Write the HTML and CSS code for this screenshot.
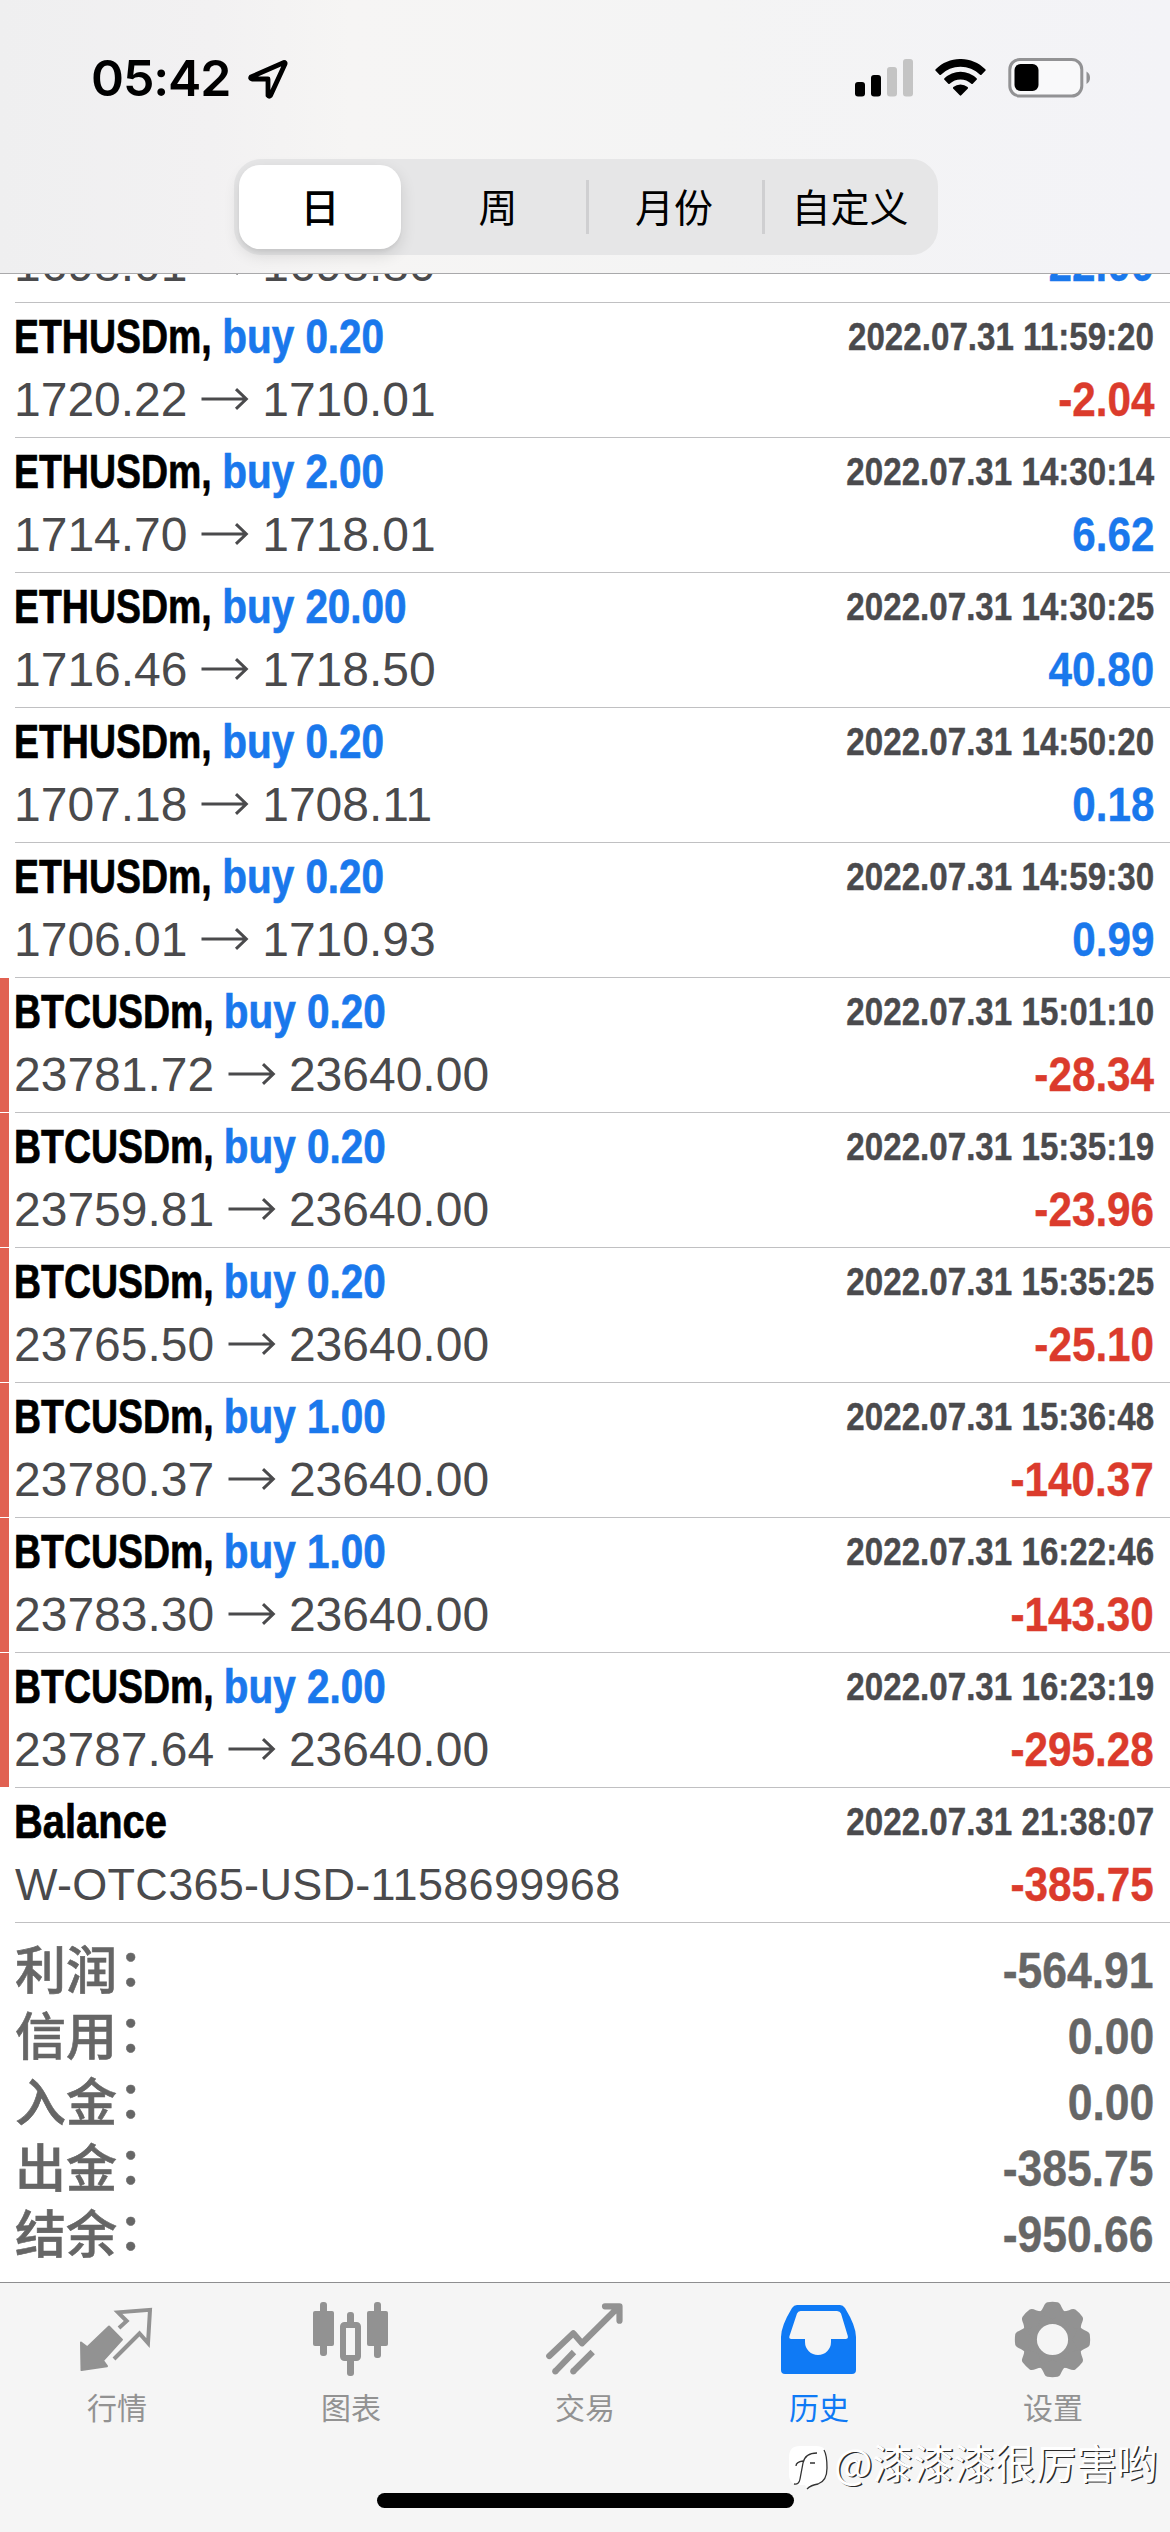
FILE: index.html
```
<!DOCTYPE html>
<html lang="zh-CN">
<head>
<meta charset="utf-8">
<title>历史</title>
<link rel="stylesheet" href="styles.css">
</head>
<body>
<svg class="defs" width="0" height="0" aria-hidden="true">
  <symbol id="arrow" viewBox="0 0 48 24"><path d="M0.5 12H45M35 2.2L45.3 12L35 21.8" fill="none" stroke="currentColor" stroke-width="3"/></symbol>
</svg>
<header class="header">
  <div class="status">
    <div class="clock">
      <span class="time">05:42</span>
      <svg class="location" viewBox="0 0 42 42"><path d="M37 4.500L4 19Q3 20.500 5 21H21V37.500Q22 39 23.500 37.500L38 6Q38.500 4.500 37 4.500Z" fill="none" stroke="#000" stroke-width="4.800" stroke-linejoin="round"/></svg>
    </div>
    <div class="indicators">
      <svg class="signal" viewBox="0 0 58 38">
        <rect x="0" y="23" width="10" height="14.5" rx="3"/><rect x="16" y="16" width="10" height="21.5" rx="3"/>
        <rect x="32" y="8" width="10" height="29.5" rx="3" fill="#c4c4c4"/><rect x="48" y="0" width="10" height="37.5" rx="3" fill="#c4c4c4"/>
      </svg>
      <svg class="wifi" viewBox="0.2 0 16.6 11.8" preserveAspectRatio="none"><path d="M8.5 2.46c2.37 0 4.65.91 6.37 2.54.13.13.34.12.47 0l1.24-1.25a.34.34 0 000-.49C12.06-1.09 4.94-1.09.42 3.26a.34.34 0 000 .49l1.24 1.25c.13.12.34.12.47 0A9.25 9.25 0 018.5 2.46zM8.5 6.54c1.3 0 2.56.48 3.52 1.36.13.12.34.12.47-.01l1.24-1.26a.35.35 0 000-.5 7.6 7.6 0 00-10.45 0 .35.35 0 000 .5l1.24 1.26c.13.13.34.13.47.01A5.2 5.2 0 018.5 6.54zM10.93 9.21c0 .1-.03.19-.1.25L8.74 11.58a.34.34 0 01-.48 0L6.17 9.46a.35.35 0 010-.5 3.6 3.6 0 014.65 0c.07.07.11.16.11.25z"/></svg>
      <svg class="battery" viewBox="0 0 83 40">
        <rect x="1.8" y="1.5" width="72" height="36.5" rx="10" fill="#f9f9fa" stroke="#929294" stroke-width="3"/>
        <rect x="6.5" y="6" width="24" height="27" rx="6"/>
        <path d="M78.5 13.5Q82 15.500 82 19.700T78.500 26Z" fill="#929294"/>
      </svg>
    </div>
  </div>
  <nav class="segments">
    <span class="segment selected">日</span><span class="segment">周</span><span class="segment divided">月份</span><span class="segment divided">自定义</span>
  </nav>
</header>

<main class="history">
  <article class="deal">
    <div class="line"><span class="title">ETHUSDm, <span class="side">buy 2.00</span></span><time class="date">2022.07.31 11:58:02</time></div>
    <div class="line"><span class="price">1698.01 <svg class="arrow"><use href="#arrow"/></svg> 1698.80</span><span class="amount gain">22.00</span></div>
  </article>
  <article class="deal">
    <div class="line"><span class="title">ETHUSDm, <span class="side">buy 0.20</span></span><time class="date">2022.07.31 11:59:20</time></div>
    <div class="line"><span class="price">1720.22 <svg class="arrow"><use href="#arrow"/></svg> 1710.01</span><span class="amount loss">-2.04</span></div>
  </article>
  <article class="deal">
    <div class="line"><span class="title">ETHUSDm, <span class="side">buy 2.00</span></span><time class="date">2022.07.31 14:30:14</time></div>
    <div class="line"><span class="price">1714.70 <svg class="arrow"><use href="#arrow"/></svg> 1718.01</span><span class="amount gain">6.62</span></div>
  </article>
  <article class="deal">
    <div class="line"><span class="title">ETHUSDm, <span class="side">buy 20.00</span></span><time class="date">2022.07.31 14:30:25</time></div>
    <div class="line"><span class="price">1716.46 <svg class="arrow"><use href="#arrow"/></svg> 1718.50</span><span class="amount gain">40.80</span></div>
  </article>
  <article class="deal">
    <div class="line"><span class="title">ETHUSDm, <span class="side">buy 0.20</span></span><time class="date">2022.07.31 14:50:20</time></div>
    <div class="line"><span class="price">1707.18 <svg class="arrow"><use href="#arrow"/></svg> 1708.11</span><span class="amount gain">0.18</span></div>
  </article>
  <article class="deal">
    <div class="line"><span class="title">ETHUSDm, <span class="side">buy 0.20</span></span><time class="date">2022.07.31 14:59:30</time></div>
    <div class="line"><span class="price">1706.01 <svg class="arrow"><use href="#arrow"/></svg> 1710.93</span><span class="amount gain">0.99</span></div>
  </article>
  <article class="deal stopped">
    <div class="line"><span class="title">BTCUSDm, <span class="side">buy 0.20</span></span><time class="date">2022.07.31 15:01:10</time></div>
    <div class="line"><span class="price">23781.72 <svg class="arrow"><use href="#arrow"/></svg> 23640.00</span><span class="amount loss">-28.34</span></div>
  </article>
  <article class="deal stopped">
    <div class="line"><span class="title">BTCUSDm, <span class="side">buy 0.20</span></span><time class="date">2022.07.31 15:35:19</time></div>
    <div class="line"><span class="price">23759.81 <svg class="arrow"><use href="#arrow"/></svg> 23640.00</span><span class="amount loss">-23.96</span></div>
  </article>
  <article class="deal stopped">
    <div class="line"><span class="title">BTCUSDm, <span class="side">buy 0.20</span></span><time class="date">2022.07.31 15:35:25</time></div>
    <div class="line"><span class="price">23765.50 <svg class="arrow"><use href="#arrow"/></svg> 23640.00</span><span class="amount loss">-25.10</span></div>
  </article>
  <article class="deal stopped">
    <div class="line"><span class="title">BTCUSDm, <span class="side">buy 1.00</span></span><time class="date">2022.07.31 15:36:48</time></div>
    <div class="line"><span class="price">23780.37 <svg class="arrow"><use href="#arrow"/></svg> 23640.00</span><span class="amount loss">-140.37</span></div>
  </article>
  <article class="deal stopped">
    <div class="line"><span class="title">BTCUSDm, <span class="side">buy 1.00</span></span><time class="date">2022.07.31 16:22:46</time></div>
    <div class="line"><span class="price">23783.30 <svg class="arrow"><use href="#arrow"/></svg> 23640.00</span><span class="amount loss">-143.30</span></div>
  </article>
  <article class="deal stopped">
    <div class="line"><span class="title">BTCUSDm, <span class="side">buy 2.00</span></span><time class="date">2022.07.31 16:23:19</time></div>
    <div class="line"><span class="price">23787.64 <svg class="arrow"><use href="#arrow"/></svg> 23640.00</span><span class="amount loss">-295.28</span></div>
  </article>
  <article class="deal">
    <div class="line"><span class="title wide">Balance</span><time class="date">2022.07.31 21:38:07</time></div>
    <div class="line"><span class="price account">W-OTC365-USD-1158699968</span><span class="amount loss">-385.75</span></div>
  </article>
</main>

<section class="summary">
  <div class="total"><span class="label">利润<i class="colon">：</i></span><span class="sum">-564.91</span></div>
  <div class="total"><span class="label">信用<i class="colon">：</i></span><span class="sum">0.00</span></div>
  <div class="total"><span class="label">入金<i class="colon">：</i></span><span class="sum">0.00</span></div>
  <div class="total"><span class="label">出金<i class="colon">：</i></span><span class="sum">-385.75</span></div>
  <div class="total"><span class="label">结余<i class="colon">：</i></span><span class="sum">-950.66</span></div>
</section>

<footer class="footer">
  <nav class="tabs">
    <span class="tab"><svg class="icon" viewBox="0 0 100 80"><path d="M14 43.500L20.300 48.300L42 27.500L55 40.700L36 61.700L40 67.200L14.500 71Z" fill="currentColor" stroke="currentColor" stroke-width="2" stroke-linejoin="round"/><path d="M52 29L59.700 22L51 13.300L83 10.800L81 44L72.500 34.500L47 60" fill="none" stroke="currentColor" stroke-width="4"/></svg>行情</span>
    <span class="tab"><svg class="icon" viewBox="0 0 100 80"><g fill="currentColor"><rect x="12" y="12" width="21" height="35" rx="2"/><rect x="19" y="3" width="7" height="54" rx="3"/><rect x="46" y="13" width="7" height="14" rx="3"/><rect x="46" y="58" width="7" height="19" rx="3"/><rect x="66" y="12" width="21" height="35" rx="2"/><rect x="73" y="3" width="7" height="56" rx="3"/></g><rect x="42" y="26" width="15" height="33" rx="1.500" fill="none" stroke="currentColor" stroke-width="6"/></svg>图表</span>
    <span class="tab"><svg class="icon" viewBox="0 0 100 80"><g fill="none" stroke="currentColor" stroke-width="6.200"><path d="M14.300 57L38.300 34.300L47 44.300L84 7.500M70 7.300H84.500V21.700" stroke-linecap="round" stroke-linejoin="round"/><path d="M20.300 72.300L39 53M38.300 72.300L57.700 53"/></g><g fill="currentColor"><circle cx="20.300" cy="72.300" r="3.100"/><circle cx="38.300" cy="72.300" r="3.100"/></g></svg>交易</span>
    <span class="tab active"><svg class="icon" viewBox="0 0 100 80"><path fill="currentColor" fill-rule="evenodd" d="M28 6H71Q74 6 76 9Q87 27 87 38V71Q87 75 83 75H16Q12 75 12 71V38Q12 27 23 9Q25 6 28 6ZM31.500 12Q29 12 28 14.500L20.500 37Q19.500 40 22.500 40H36V43A13 13 0 0 0 62 43V40H76.500Q79.500 40 78.800 37L72 14.500Q71 12 68 12Z"/></svg>历史</span>
    <span class="tab"><svg class="icon" viewBox="0 0 100 80"><g transform="translate(49.500 40.500)" fill="currentColor"><circle r="22.600" fill="none" stroke="currentColor" stroke-width="14"/><g id="teeth"><path id="tooth" d="M-5 -37.300Q0 -38 5 -37.300C9 -36.500 8 -31 13.500 -26.500L0 -20L-13.500 -26.500C-8 -31 -9 -36.500 -5 -37.300Z"/><use href="#tooth" transform="rotate(90)"/><use href="#tooth" transform="rotate(180)"/><use href="#tooth" transform="rotate(270)"/></g><use href="#teeth" transform="rotate(45)"/></g></svg>设置</span>
  </nav>
  <div class="home"></div>
  <div class="watermark">
    <svg class="mark" viewBox="0 0 46 48"><path d="M13 3H29Q40 3 40 14V30Q40 38 31 41Q25 42 21 47L18 42H13Q2 42 2 31V14Q2 3 13 3Z" fill="#fff"/><path d="M37 7Q40 12 40 25Q40 38 31 41Q24 42 20 46M7 41Q12 42 13 36L16 20Q18 10 30 10M9 23Q9 19 16 18M23 20H28" fill="none" stroke="#333" stroke-width="1.300"/></svg>
    <span>@漆漆漆很厉害哟</span>
  </div>
</footer>
</body>
</html>
```
FILE: styles.css
```
* { box-sizing: border-box; }

body {
  margin: 0;
  width: 1170px;
  height: 2532px;
  overflow: hidden;
  display: flex;
  flex-direction: column;
  background: #fff;
  font-family: "Liberation Sans", "Noto Sans CJK SC", sans-serif;
}

.defs { position: absolute; }

.header {
  position: relative;
  z-index: 1;
  flex: none;
  height: 274px;
  border-bottom: 1px solid #a9a9ab;
  background: linear-gradient(90deg, #efeff0 0%, #f2f1f2 18%, #f6f5f4 30%, #f4f4f4 60%, #f3f3f7 100%);
}

.status {
  height: 159px;
  padding: 58px 79px 0 91px;
  display: flex;
  justify-content: space-between;
  align-items: flex-start;
}

.clock { display: flex; gap: 14px; }
.time {
  font: 600 50px/41px Inter, sans-serif;
  letter-spacing: -1.1px;
  width: 142px;
}
.location { width: 42px; height: 42px; }

.indicators { display: flex; align-items: flex-start; }
.signal { width: 58px; height: 38px; margin: 1px 22px 0 0; }
.wifi { width: 51px; height: 37px; margin: 1px 22px 0 0; }
.battery { width: 83px; height: 40px; }

.segments {
  width: 704px;
  height: 96px;
  margin-left: 234px;
  display: grid;
  grid-template-columns: repeat(4, 1fr);
  align-items: center;
  border-radius: 27px;
  background: #e6e6e7;
}
.segment {
  font: 400 39px/80px "Noto Sans CJK SC", sans-serif;
  height: 84px;
  text-align: center;
}
.segment.selected {
  width: 162px;
  margin-left: 5px;
  font-weight: 500;
  border-radius: 21px;
  background: #fff;
  box-shadow: 0 6px 16px rgba(0, 0, 0, 0.12), 0 3px 3px rgba(0, 0, 0, 0.04);
}
.segment.divided {
  background: linear-gradient(#cfcfd1, #cfcfd1) no-repeat 0 15px / 3px 54px;
}

.history { flex: none; margin-top: -106px; }

.deal {
  height: 135px;
  padding: 4px 16px 0 14px;
  display: flex;
  flex-direction: column;
  gap: 3px;
  background: linear-gradient(#c0c0c2, #c0c0c2) no-repeat 15px 134px / 1155px 1px;
}
.deal.stopped {
  background:
    linear-gradient(#e16152, #e16152) no-repeat 0 0 / 9px 134px,
    linear-gradient(#c0c0c2, #c0c0c2) no-repeat 15px 134px / 1155px 1px;
}

.line {
  height: 60px;
  line-height: 60px;
  display: flex;
  justify-content: space-between;
  white-space: nowrap;
}

/* condensed bold faces */
.title, .date, .amount, .sum { font-weight: 700; }
.title {
  font-size: 48px;
  transform: scaleX(0.78);
  transform-origin: left;
  -webkit-text-stroke: 0.7px currentColor;
}
.title.wide { transform: scaleX(0.83); }
.side {
  display: inline-block;
  color: #1a78ec;
  transform: scaleX(1.08);
  transform-origin: left;
}
.date { font-size: 39px; color: #4a4a4d; transform: scaleX(0.85); transform-origin: right; }
.amount { font-size: 48px; transform: scaleX(0.88); transform-origin: right; }
.gain { color: #1a78ec; }
.loss { color: #db3b2c; }
.date, .amount, .sum { -webkit-text-stroke: 0.4px currentColor; }

.price { font-size: 48px; color: #4a4a4c; }
.account { font-size: 45px; letter-spacing: 0.3px; padding-left: 1px; }
.arrow { width: 48px; height: 24px; vertical-align: 5px; }

.summary {
  flex: 1;
  padding: 15px 16px 0 15px;
  color: #666;
}
.total {
  height: 66px;
  display: flex;
  justify-content: space-between;
}
.label {
  font: 500 51px/58px "Noto Sans CJK SC", sans-serif;
  -webkit-text-stroke: 0.6px currentColor;
}
.colon { position: relative; top: -3px; left: 1px; font-style: normal; }
.sum { font-size: 50px; line-height: 66px; transform: scaleX(0.89); transform-origin: right; }

.footer {
  position: relative;
  flex: none;
  height: 250px;
  border-top: 1px solid #8e8e90;
  background: #f5f5f5;
}
.tabs {
  height: 210px;
  padding-top: 16px;
  display: grid;
  grid-template-columns: repeat(5, 1fr);
}
.tab {
  display: flex;
  flex-direction: column;
  align-items: center;
  gap: 5px;
  color: #929292;
  font: 400 30px/44px "Noto Sans CJK SC", sans-serif;
}
.tab.active { color: #0f7af5; }
.icon { width: 100px; height: 80px; }

.home {
  width: 417px;
  height: 15px;
  margin: 0 auto;
  border-radius: 8px;
  background: #000;
}

.watermark {
  position: absolute;
  left: 787px;
  top: 156px;
  display: flex;
  gap: 1px;
  white-space: nowrap;
  color: #fff;
  font: 400 40.7px/46px "Noto Sans CJK SC", sans-serif;
  text-shadow: 1.5px 1px 0 #2a2a2a;
}
.mark { width: 46px; height: 48px; margin-top: 4px; }
```
